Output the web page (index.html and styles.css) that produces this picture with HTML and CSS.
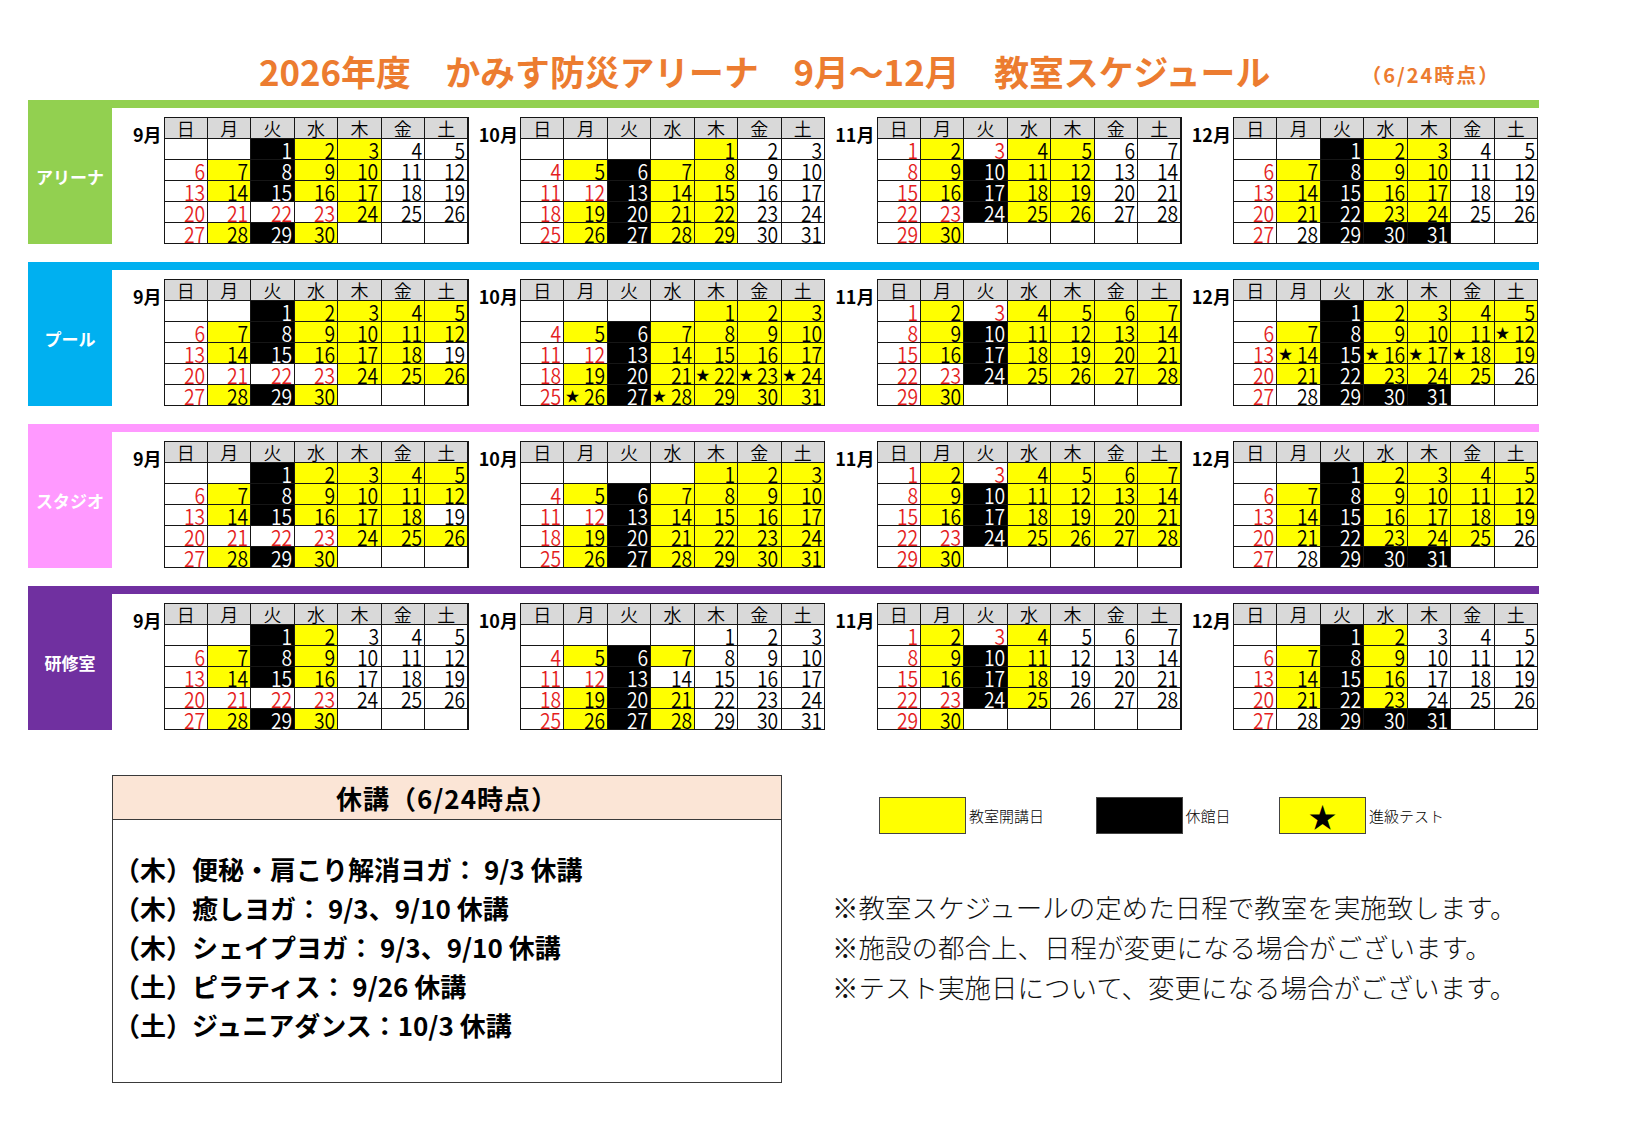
FILE: index.html
```html
<!DOCTYPE html>
<html lang="ja">
<head>
<meta charset="utf-8">
<title>2026年度 かみす防災アリーナ 教室スケジュール</title>
<link rel="stylesheet" href="styles.css">
</head>
<body>
<div class="page">
  <header class="top">
    <h1 class="title">2026年度　かみす防災アリーナ　9月～12月　教室スケジュール</h1>
    <span class="asof">（6/24時点）</span>
  </header>

  <section class="sec arena">
    <div class="band"></div>
    <div class="sec-body">
      <div class="sec-label">アリーナ</div>
      <div class="months">
        <div class="month"><div class="mlabel">9月</div><div class="cal" data-m="0" data-codes="byyww wybyyww wybyyww wwwwyww wyby"></div></div>
        <div class="month"><div class="mlabel">10月</div><div class="cal" data-m="1" data-codes="yww wybyyww wwbyyww wybyyww wybyyww"></div></div>
        <div class="month"><div class="mlabel">11月</div><div class="cal" data-m="2" data-codes="wywyyww wybyyww wybyyww wwbyyww wy"></div></div>
        <div class="month"><div class="mlabel">12月</div><div class="cal" data-m="3" data-codes="byyww wybyyww wybyyww wybyyww wwbbb"></div></div>
      </div>
    </div>
  </section>

  <section class="sec pool">
    <div class="band"></div>
    <div class="sec-body">
      <div class="sec-label">プール</div>
      <div class="months">
        <div class="month"><div class="mlabel">9月</div><div class="cal" data-m="0" data-codes="byyyy wybyyyy wybyyyw wwwwyyy wyby"></div></div>
        <div class="month"><div class="mlabel">10月</div><div class="cal" data-m="1" data-codes="yyy wybyyyy wwbyyyy wybysss wsbsyyy"></div></div>
        <div class="month"><div class="mlabel">11月</div><div class="cal" data-m="2" data-codes="wywyyyy wybyyyy wybyyyy wwbyyyy wy"></div></div>
        <div class="month"><div class="mlabel">12月</div><div class="cal" data-m="3" data-codes="byyyy wybyyys wsbsssy wybyyyw wwbbb"></div></div>
      </div>
    </div>
  </section>

  <section class="sec studio">
    <div class="band"></div>
    <div class="sec-body">
      <div class="sec-label">スタジオ</div>
      <div class="months">
        <div class="month"><div class="mlabel">9月</div><div class="cal" data-m="0" data-codes="byyyy wybyyyy wybyyyw wwwwyyy wyby"></div></div>
        <div class="month"><div class="mlabel">10月</div><div class="cal" data-m="1" data-codes="yyy wybyyyy wwbyyyy wybyyyy wybyyyy"></div></div>
        <div class="month"><div class="mlabel">11月</div><div class="cal" data-m="2" data-codes="wywyyyy wybyyyy wybyyyy wwbyyyy wy"></div></div>
        <div class="month"><div class="mlabel">12月</div><div class="cal" data-m="3" data-codes="byyyy wybyyyy wybyyyy wybyyyw wwbbb"></div></div>
      </div>
    </div>
  </section>

  <section class="sec training">
    <div class="band"></div>
    <div class="sec-body">
      <div class="sec-label">研修室</div>
      <div class="months">
        <div class="month"><div class="mlabel">9月</div><div class="cal" data-m="0" data-codes="bywww wybywww wybywww wwwwwww wyby"></div></div>
        <div class="month"><div class="mlabel">10月</div><div class="cal" data-m="1" data-codes="www wybywww wwbwwww wybywww wybywww"></div></div>
        <div class="month"><div class="mlabel">11月</div><div class="cal" data-m="2" data-codes="wywywww wybywww wybywww wwbywww wy"></div></div>
        <div class="month"><div class="mlabel">12月</div><div class="cal" data-m="3" data-codes="bywww wybywww wybywww wybywww wwbbb"></div></div>
      </div>
    </div>
  </section>

  <div class="bottom">
    <div class="notice">
      <div class="notice-head">休講（6/24時点）</div>
      <ul class="notice-list">
        <li>（木）便秘・肩こり解消ヨガ： 9/3 休講</li>
        <li>（木）癒しヨガ： 9/3、9/10 休講</li>
        <li>（木）シェイプヨガ： 9/3、9/10 休講</li>
        <li>（土）ピラティス： 9/26 休講</li>
        <li>（土）ジュニアダンス：10/3 休講</li>
      </ul>
    </div>
    <div class="info">
      <div class="legend">
        <div class="lg-item"><span class="lg-box lg-yellow"></span><span class="lg-text">教室開講日</span></div>
        <div class="lg-item lg-mid"><span class="lg-box lg-black"></span><span class="lg-text">休館日</span></div>
        <div class="lg-item"><span class="lg-box lg-yellow lg-star">★</span><span class="lg-text">進級テスト</span></div>
      </div>
      <div class="notes">
        <p>※教室スケジュールの定めた日程で教室を実施致します。</p>
        <p>※施設の都合上、日程が変更になる場合がございます。</p>
        <p>※テスト実施日について、変更になる場合がございます。</p>
      </div>
    </div>
  </div>
</div>
<script src="script.js"></script>
</body>
</html>
```

FILE: styles.css
```css
* { box-sizing: border-box; }

body {
  margin: 0;
  background: #fff;
  color: #000;
  font-family: "Noto Sans CJK JP", "Noto Sans", sans-serif;
  text-spacing-trim: space-all;
}

.page {
  width: 1625px;
  padding-left: 28px;
}

/* header */
.top {
  height: 100px;
  display: flex;
  align-items: flex-start;
  padding-top: 48px;
  padding-left: 231px;
}
.title {
  margin: 0;
  font-size: 34.8px;
  line-height: 46px;
  font-weight: 700;
  color: #ec7c30;
  white-space: nowrap;
}
.asof {
  margin-left: 91px;
  margin-top: 14px;
  font-size: 20px;
  line-height: 25px;
  letter-spacing: 2px;
  font-weight: 700;
  color: #ec7c30;
  white-space: nowrap;
}

/* sections */
.sec { width: 1511px; margin-bottom: 18px; }
.band { height: 8px; }
.sec-body { display: flex; height: 136px; }
.sec-label {
  width: 84px;
  flex: none;
  display: flex;
  align-items: center;
  justify-content: center;
  color: #fff;
  font-size: 17px;
  font-weight: 700;
}
.arena .band, .arena .sec-label { background: #92d050; }
.pool .band, .pool .sec-label { background: #00b0f0; }
.studio .band, .studio .sec-label { background: #ff99ff; }
.training .band, .training .sec-label { background: #7030a0; }

.months { display: flex; }
.month { display: flex; align-items: flex-start; }
.mlabel {
  width: 51.5px;
  margin-top: 9px;
  padding-top: 6px;
  padding-right: 2px;
  text-align: right;
  font-size: 18px;
  line-height: 23px;
  font-weight: 700;
}

.cal {
  margin-top: 9px;
  width: 305px;
  height: 127px;
  display: grid;
  grid-template-columns: repeat(7, 1fr);
  grid-template-rows: 20px repeat(5, 1fr);
  gap: 1px;
  padding: 1px;
  background: #161616;
}
.h {
  background: #d9d9d9;
  display: flex;
  align-items: center;
  justify-content: center;
  font-size: 18px;
  font-weight: 350;
  line-height: 18px;
}
.c {
  background: #fff;
  display: flex;
  align-items: center;
  justify-content: flex-end;
  padding-right: 2px;
  font-size: 22px;
  font-weight: 350;
  line-height: 18px;
}
.c.y { background: #ffff00; }
.c.b { background: #000; color: #fff; }
.c.red { color: #e41e1e; }
.c .n {
  display: inline-block;
  height: 18px;
  transform: scaleX(0.88);
  transform-origin: right center;
}
.c .st {
  margin-right: auto;
  padding-left: 1px;
  font-size: 14px;
  line-height: 14px;
  font-weight: 400;
  color: #000;
}

/* bottom */
.bottom {
  display: flex;
  margin-top: 45px;
}
.notice {
  margin-left: 84px;
  width: 670px;
  height: 308px;
  flex: none;
  border: 1.5px solid #3a3a3a;
}
.notice-head {
  height: 44px;
  background: #fbe5d6;
  border-bottom: 1.5px solid #3a3a3a;
  display: flex;
  align-items: center;
  justify-content: center;
  font-size: 26px;
  letter-spacing: 1px;
  font-weight: 700;
}
.notice-list {
  list-style: none;
  margin: 0;
  padding: 29px 0 0 1px;
}
.notice-list li {
  font-size: 26px;
  line-height: 39px;
  font-weight: 700;
  white-space: nowrap;
}

.info {
  margin-left: 50px;
  padding-top: 22px;
}
.legend {
  display: flex;
  padding-left: 47px;
}
.lg-item {
  width: 216.5px;
  display: flex;
  align-items: center;
}
.lg-item.lg-mid { width: 183.5px; }
.lg-box {
  width: 87px;
  height: 37px;
  flex: none;
  border: 1.5px solid #444;
  display: flex;
  align-items: center;
  justify-content: center;
}
.lg-yellow { background: #ffff00; }
.lg-black { background: #000; }
.lg-star { font-size: 28px; line-height: 1; }
.lg-text {
  margin-left: 3px;
  font-size: 15px;
  font-weight: 300;
  white-space: nowrap;
}

.notes { margin-top: 53px; }
.notes p {
  margin: 0;
  font-size: 26.5px;
  line-height: 40px;
  font-weight: 300;
  color: #111;
  white-space: nowrap;
}
```

FILE: script.js
```js
(function () {
  var MONTHS = [
    { start: 2, days: 30, red: [6, 13, 20, 21, 22, 23, 27] },
    { start: 4, days: 31, red: [4, 11, 12, 18, 25] },
    { start: 0, days: 30, red: [1, 3, 8, 15, 22, 23, 29] },
    { start: 2, days: 31, red: [6, 13, 20, 27] }
  ];
  var DOW = ['日', '月', '火', '水', '木', '金', '土'];

  var cals = document.querySelectorAll('.cal');
  for (var k = 0; k < cals.length; k++) {
    var cal = cals[k];
    var m = MONTHS[+cal.getAttribute('data-m')];
    var codes = cal.getAttribute('data-codes').replace(/\s+/g, '');
    for (var d = 0; d < 7; d++) {
      var h = document.createElement('div');
      h.className = 'h';
      h.textContent = DOW[d];
      cal.appendChild(h);
    }
    for (var i = 0; i < 35; i++) {
      var day = i - m.start + 1;
      var cell = document.createElement('div');
      var cls = 'c';
      if (day >= 1 && day <= m.days) {
        var code = codes.charAt(day - 1);
        if (code === 'y' || code === 's') cls += ' y';
        if (code === 'b') cls += ' b';
        if (m.red.indexOf(day) !== -1) cls += ' red';
        if (code === 's') {
          var st = document.createElement('span');
          st.className = 'st';
          st.textContent = '★';
          cell.appendChild(st);
        }
        var n = document.createElement('span');
        n.className = 'n';
        n.textContent = String(day);
        cell.appendChild(n);
      }
      cell.className = cls;
      cal.appendChild(cell);
    }
  }
})();
```
